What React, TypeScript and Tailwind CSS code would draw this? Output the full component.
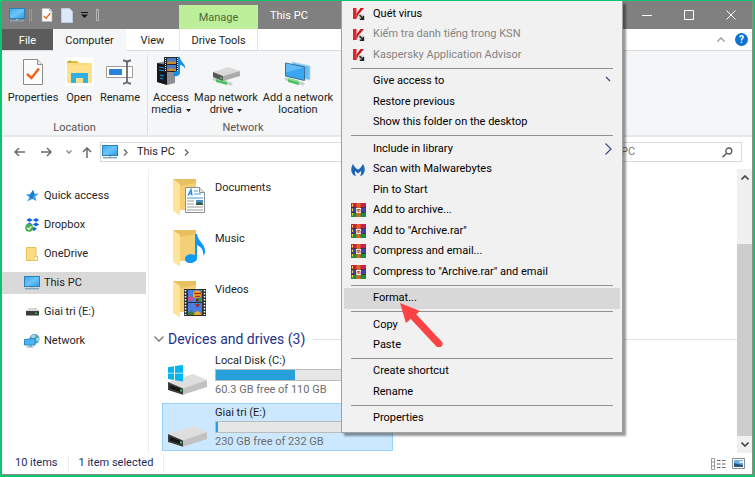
import type { ReactNode } from "react";

type MenuEntry = {
  label: string;
  icon?: "kaspersky" | "malwarebytes" | "rar";
  muted?: boolean;
  active?: boolean;
  arrow?: "full" | "cut";
};

const menuGroups: MenuEntry[][] = [
  [
    { label: "Quét virus", icon: "kaspersky" },
    { label: "Kiểm tra danh tiếng trong KSN", icon: "kaspersky", muted: true },
    { label: "Kaspersky Application Advisor", icon: "kaspersky", muted: true },
  ],
  [
    { label: "Give access to", arrow: "cut" },
    { label: "Restore previous" },
    { label: "Show this folder on the desktop" },
  ],
  [
    { label: "Include in library", arrow: "full" },
    { label: "Scan with Malwarebytes", icon: "malwarebytes" },
    { label: "Pin to Start" },
    { label: "Add to archive...", icon: "rar" },
    { label: 'Add to "Archive.rar"', icon: "rar" },
    { label: "Compress and email...", icon: "rar" },
    { label: 'Compress to "Archive.rar" and email', icon: "rar" },
  ],
  [{ label: "Format...", active: true }],
  [{ label: "Copy" }, { label: "Paste" }],
  [{ label: "Create shortcut" }, { label: "Rename" }],
  [{ label: "Properties" }],
];

function MonitorIcon({ className }: { className: string }) {
  return (
    <svg viewBox="0 0 16 14" className={className} aria-hidden="true">
      <defs>
        <linearGradient id="screen" x1="0" y1="0" x2="1" y2="1">
          <stop offset="0" stopColor="#3aa9ee" />
          <stop offset="0.5" stopColor="#6cc5f8" />
          <stop offset="1" stopColor="#2c9be6" />
        </linearGradient>
      </defs>
      <rect x="0.5" y="0.5" width="15" height="10" fill="url(#screen)" stroke="#2a7fb8" />
      <rect x="7" y="11" width="2" height="1" fill="#9fc4d8" />
      <rect x="1" y="12" width="14" height="1.4" fill="#7fa6ba" />
    </svg>
  );
}

function CheckPage({ className }: { className: string }) {
  return (
    <svg viewBox="0 0 20 26" className={className} aria-hidden="true">
      <path d="M.5.5h14l5 5v20H.5z" fill="#fbfbfb" stroke="#8c8c8c" />
      <path d="M14.5.5v5h5" fill="#e4e4e4" stroke="#8c8c8c" />
      <path d="M4 15l4.500 4L16 9.500" fill="none" stroke="#f0601e" strokeWidth="2.500" />
    </svg>
  );
}

function OpenFolderIcon() {
  return (
    <svg viewBox="0 0 29 29" className="size-[29px]" aria-hidden="true">
      <path d="M0 0h29v29H0z" fill="#fff" />
      <path d="M2 4h10l2 2h13v20H2z" fill="#fddc7b" />
      <path d="M2 4h10l2 2H2z" fill="#e9b93a" />
      <path d="M4 4.500h2" stroke="#5fae3c" strokeWidth="1.400" />
      <path d="M2 8h25v18H2z" fill="#ffe18d" />
      <path d="M6 26V16h17v10h-5v-5h-7v5z" fill="#2fb0e8" />
    </svg>
  );
}

function RenameIcon() {
  return (
    <svg viewBox="0 0 28 28" className="size-7" aria-hidden="true">
      <path d="M.5 8.500h26v11H.5z" fill="#fff" stroke="#9a9a9a" />
      <path d="M3 11h13v6H3z" fill="#2b83e0" />
      <path d="M17 2.500c3 0 4 .5 4 2.500v18c0 2-1 2.500-4 2.500M25 2.500c-3 0-4 .5-4 2.500v18c0 2 1 2.500 4 2.500" fill="none" stroke="#6a6a6a" strokeWidth="1.800" />
    </svg>
  );
}

function AccessMediaIcon() {
  return (
    <svg viewBox="0 0 30 29" className="h-[29px] w-[30px]" aria-hidden="true">
      <path d="M1 6l9-2 9 3v19l-8 2-10-3z" fill="#8b8f94" />
      <path d="M1 6l10 2v20L1 25z" fill="#14181d" />
      <path d="M3 10l6 1M3 13l6 1M4 18l4 1M4 21l3 1" stroke="#1d93ee" strokeWidth="1.200" />
      <path d="M8 0h15v15H8z" fill="#20242a" />
      <path d="M11 1h9v6h-9zM11 8h9v6h-9z" fill="#4c7cc7" />
      <path d="M11 6l3-2 3 1 3-1v3h-9zM11 13l4-2 5 1v2h-9z" fill="#c98a2c" />
      <path d="M9.500 1v14M21.500 1v14" stroke="#e9e9e9" strokeDasharray="1 1" />
      <path d="M22 0h2c0 5 6 6 5 12-1-3-3-4-5-4v8c0 3-7 5-7 1 0-2 3-3 5-3z" fill="#1391ea" />
    </svg>
  );
}

function DriveIcon({ className, windows }: { className: string; windows?: boolean }) {
  return (
    <svg viewBox="0 0 40 31" className={className} aria-hidden="true">
      <path d="M1 18L26 10l14 6-24 9z" fill="#dedede" />
      {windows && <path d="M1 3.200l6-.9v6.400H1zM8 2.100l8-1.200v7.800H8zM1 9.600h6V16l-6-.9zM8 9.600h8v7.800l-8-1.200z" fill="#00b4ef" />}
      <path d="M1 18l15 6.500v6.300L1 26z" fill="#3a3a3a" />
      <path d="M3 21l11 4v3L3 24.500z" fill="#161616" />
      <path d="M13 25.600h2v2h-2z" fill="#35d24a" />
      <path d="M16 24.500L40 16v7l-24 7.800z" fill="#c2c2c2" />
    </svg>
  );
}

function CableBase() {
  return (
    <>
      <path d="M3 22l17 5" stroke="#c9cfd2" strokeWidth="3" strokeLinecap="round" />
      <path d="M5 21l11 3v4L5 25z" fill="#4fbf62" />
      <path d="M5 21l11 3v1.500L5 22.500z" fill="#8be09a" />
    </>
  );
}

function MapDriveIcon() {
  return (
    <svg viewBox="0 0 30 29" className="h-[29px] w-[30px]" aria-hidden="true">
      <CableBase />
      <path d="M2 15l15-5 12 4-17 5z" fill="#dadada" />
      <path d="M2 15l10 4v5L2 20z" fill="#585858" />
      <path d="M12 19l17-5v5l-17 5z" fill="#ababab" />
      <path d="M9 20.500h2v1.500H9z" fill="#3ed353" />
    </svg>
  );
}

function NetworkLocationIcon() {
  return (
    <svg viewBox="0 0 30 29" className="h-[29px] w-[30px]" aria-hidden="true">
      <CableBase />
      <path d="M9 5l18 4v14l-18-4z" fill="#6abdf2" stroke="#b9d9eb" />
      <path d="M2.500 6l19 4v13.500l-19-4.500z" fill="#38a6f1" stroke="#3b6f94" />
      <path d="M3 6.500l18 4-18 5z" fill="#7dcbfa" opacity=".6" />
    </svg>
  );
}

function FolderIcon({ kind }: { kind: "doc" | "music" | "video" }) {
  return (
    <svg viewBox="0 0 36 38" className="h-[38px] w-9" aria-hidden="true">
      <path d="M1 1h23v31H8z" fill="#f3d075" />
      <path d="M1 1h23v4L8 8z" fill="#e8c05f" />
      <path d="M1 1l7 5v31.500L1 33z" fill="#ffe49a" />
      {kind === "doc" && (
        <g>
          <path d="M13.500 9.500h14l5 5v20h-19z" fill="#fff" stroke="#8e8e8e" />
          <path d="M27.500 9.500v5h5" fill="#e2e2e2" stroke="#8e8e8e" />
          <path d="M16 17.500l3-6 1 6M17 15.500h3" fill="none" stroke="#2288d8" strokeWidth="1.300" />
          <path d="M22 13h4M22 16h7M15 20h16" stroke="#3d9ade" strokeWidth="1.200" />
          <path d="M15 23h7M15 26h7M15 29h16M15 32h16" stroke="#9a9a9a" />
          <path d="M24 22h7v5h-7z" fill="#4e8fc0" />
          <path d="M24 25l4-1 3 2v1h-7z" fill="#325b42" />
        </g>
      )}
      {kind === "music" && (
        <path d="M23 5h2c1 8 9 10 8 19l-2 3c1-6-2-9-6-11v13c0 6-12 7-12 1 0-4 5-6 10-4z" fill="#0c98f5" />
      )}
      {kind === "video" && (
        <g>
          <path d="M12 9h22v27H12z" fill="#2f2f30" />
          <path d="M16 10h14v12H16zM16 23h14v12H16z" fill="#4a7fe0" />
          <circle cx="25" cy="14.500" r="4" fill="#f3b41d" />
          <path d="M22 13.500h7M23 16.500h5" stroke="#b52920" strokeWidth="1.500" />
          <path d="M24 18.500h3v3h-3z" fill="#58351b" />
          <circle cx="18.500" cy="18.500" r="2.500" fill="#d24a90" />
          <circle cx="28" cy="20" r="1.600" fill="#2f9b3b" />
          <path d="M16 33l3-2 3 2v2h-6z" fill="#3b7e38" />
          <path d="M22 35c0-5 7-5 7 0z" fill="#efae1c" />
          <path d="M23 24h5l-2.500 4z" fill="#a72626" />
          <path d="M13.500 10v25M32.500 10v25" stroke="#fff" strokeWidth="1.500" strokeDasharray="1.500 1.500" />
        </g>
      )}
    </svg>
  );
}

function MenuIcon({ name }: { name: NonNullable<MenuEntry["icon"]> }) {
  if (name === "kaspersky") {
    return (
      <svg viewBox="0 0 14 14" className="size-3.5" aria-hidden="true">
        <path d="M2 1h3.500v11H2z" fill="#e0242a" />
        <path d="M5.500 6.500L9.500 1H13L7.500 7.500 5.500 12z" fill="#c9181f" />
        <path d="M7.500 7.500H13V13H8z" fill="#c3cecb" />
        <path d="M8.500 8l3.500 3.500M12.500 9v3.300H9" fill="none" stroke="#222" strokeWidth="1.400" />
      </svg>
    );
  }
  if (name === "malwarebytes") {
    return (
      <svg viewBox="0 0 14 14" className="size-3.5" aria-hidden="true">
        <path d="M2 1c1.500 3 3 4.500 5 5.500C9 5.500 10.500 4 12 1c2.300 3.500 2.500 8-.5 11L9 13.200c1-1.700 1.300-3.500 1-5.200L7 10.500 4 8c-.3 1.700 0 3.500 1 5.200L2.500 12C-.5 9-.3 4.500 2 1z" fill="#1e66b5" />
      </svg>
    );
  }
  return (
    <svg viewBox="0 0 15 14" className="h-3.5 w-[15px]" aria-hidden="true">
      <path d="M0 0h15v4.500H0z" fill="#c71f4d" />
      <path d="M0 4.500h15v5H0z" fill="#3c42b4" />
      <path d="M0 9.500h15V14H0z" fill="#1a8f43" />
      <path d="M0 4.500h15M0 9.500h15" stroke="#3d2024" strokeWidth=".8" />
      <path d="M1.500 1v12" stroke="#eed13c" strokeDasharray="2.500 2" />
      <path d="M5.500 0h4v14h-4z" fill="#e2641d" />
      <path d="M5 5h5v5H5z" fill="#f7efe5" />
      <path d="M6 9V6.500h3V9M7.500 7v2" fill="none" stroke="#a34420" strokeWidth=".8" />
    </svg>
  );
}

function RibbonButton({ icon, label, width, caret }: { icon: ReactNode; label: string[]; width: string; caret?: boolean }) {
  return (
    <button type="button" className={`flex flex-col items-center ${width}`}>
      <span className="flex h-[37px] items-center pb-1">{icon}</span>
      {label.map((line, i) => (
        <span key={line} className="flex items-center gap-1 leading-3 whitespace-nowrap">
          {line}
          {caret && i === label.length - 1 && (
            <svg viewBox="0 0 5 3" className="h-[3px] w-[5px]" aria-hidden="true">
              <path d="M0 0h5L2.500 3z" fill="#222" />
            </svg>
          )}
        </span>
      ))}
    </button>
  );
}

function TitleBar() {
  return (
    <header className="flex h-7 items-stretch bg-[#808080] text-white">
      <div className="flex w-[177px] items-center pl-[7px]">
        <MonitorIcon className="h-3.5 w-4" />
        <span className="ml-1 h-3 w-[3px] border border-[#999]" />
        <CheckPage className="ml-[9px] h-3.5 w-3" />
        <svg viewBox="0 0 12 15" className="ml-2 h-[15px] w-3" aria-hidden="true">
          <path d="M.5.5h8l3 3v11H.5z" fill="#dce9fb" stroke="#bccbe2" />
        </svg>
        <svg viewBox="0 0 7 6" className="ml-2 h-1.5 w-[7px]" aria-hidden="true">
          <path d="M0 .5h7" stroke="#111" />
          <path d="M0 2.500h7L3.500 6z" fill="#111" />
        </svg>
        <span className="ml-2 h-3 w-[3px] border border-[#b5b5b5]" />
      </div>
      <div className="mt-1 flex w-[79px] items-center justify-center bg-[#bdee99] pt-0.5 text-[#4f6b3a]">Manage</div>
      <h1 className="ml-3 flex items-center pt-0.5">This PC</h1>
      <div className="ml-auto flex">
        <button type="button" aria-label="Minimize" className="flex w-[42px] items-center justify-center">
          <svg viewBox="0 0 10 10" className="size-2.5"><path d="M0 5.500h10" stroke="#fff" /></svg>
        </button>
        <button type="button" aria-label="Maximize" className="flex w-[42px] items-center justify-center">
          <svg viewBox="0 0 10 10" className="size-2.5"><path d="M.5.5h9v9h-9z" fill="none" stroke="#fff" /></svg>
        </button>
        <button type="button" aria-label="Close" className="flex w-[42px] items-center justify-center">
          <svg viewBox="0 0 10 10" className="size-2.5"><path d="M.5.5l9 9M9.500.5l-9 9" stroke="#fff" /></svg>
        </button>
      </div>
    </header>
  );
}

function Tabs() {
  return (
    <nav className="flex h-[22px] border-b border-[#dadbdc] bg-white">
      <button type="button" className="w-[51px] bg-[#5c5c5c] pt-1 text-white">File</button>
      <button type="button" className="-mb-px w-[73px] bg-[#f5f6f7] pt-0.5">Computer</button>
      <button type="button" className="w-[53px] pt-1">View</button>
      <button type="button" className="w-[79px] border-x border-[#e3e3e3] pt-1">Drive Tools</button>
      <div className="ml-auto flex items-center gap-2.5 pr-1">
        <button type="button" aria-label="Collapse ribbon">
          <svg viewBox="0 0 8 5" className="h-[5px] w-2"><path d="M.5 4.500L4 1l3.500 3.500" fill="none" stroke="#999" strokeWidth="1.300" /></svg>
        </button>
        <button type="button" aria-label="Help" className="flex size-[13px] items-center justify-center rounded-full bg-[#0a74d0] text-[10px] leading-none font-bold text-white">?</button>
      </div>
    </nav>
  );
}

function Ribbon() {
  return (
    <section className="flex h-[86px] border-b-2 border-[#e6e7e8] bg-[#f5f6f7] pt-1">
      <div className="flex w-[146px] flex-col justify-between border-r border-[#dfe0e1]">
        <div className="flex pl-1">
          <RibbonButton icon={<CheckPage className="h-[26px] w-5" />} label={["Properties"]} width="w-[54px]" />
          <RibbonButton icon={<OpenFolderIcon />} label={["Open"]} width="w-[38px]" />
          <RibbonButton icon={<RenameIcon />} label={["Rename"]} width="w-[44px]" />
        </div>
        <p className="pb-px text-center leading-3 text-[#555]">Location</p>
      </div>
      <div className="flex w-[190px] flex-col justify-between">
        <div className="flex">
          <RibbonButton icon={<AccessMediaIcon />} label={["Access", "media"]} width="w-[46px]" caret />
          <RibbonButton icon={<MapDriveIcon />} label={["Map network", "drive"]} width="w-16" caret />
          <RibbonButton icon={<NetworkLocationIcon />} label={["Add a network", "location"]} width="w-20" />
        </div>
        <p className="pb-px text-center leading-3 text-[#555]">Network</p>
      </div>
    </section>
  );
}

function Chevron() {
  return (
    <svg viewBox="0 0 5 7" className="h-[7px] w-[5px]" aria-hidden="true">
      <path d="M1 .5l3 3-3 3" fill="none" stroke="#666" strokeWidth="1.300" />
    </svg>
  );
}

function AddressBar() {
  return (
    <div className="flex h-[30px] items-center pr-2.5 pl-3">
      <button type="button" aria-label="Back" className="w-[27px]">
        <svg viewBox="0 0 11 10" className="h-2.5 w-[11px]"><path d="M11 5H1M5 1L1 5l4 4" fill="none" stroke="#6b6b6b" strokeWidth="1.500" /></svg>
      </button>
      <button type="button" aria-label="Forward" className="w-[25px]">
        <svg viewBox="0 0 11 10" className="h-2.5 w-[11px]"><path d="M0 5h10M6 1l4 4-4 4" fill="none" stroke="#6b6b6b" strokeWidth="1.500" /></svg>
      </button>
      <button type="button" aria-label="Recent locations" className="w-4">
        <svg viewBox="0 0 6 4" className="h-1 w-1.5"><path d="M.5.5L3 3 5.500.5" fill="none" stroke="#888" strokeWidth="1.300" /></svg>
      </button>
      <button type="button" aria-label="Up" className="w-[18px]">
        <svg viewBox="0 0 10 11" className="h-[11px] w-2.5"><path d="M5 11V1M1 5l4-4 4 4" fill="none" stroke="#6b6b6b" strokeWidth="1.500" /></svg>
      </button>
      <div className="flex h-5 flex-1 items-center border border-[#d9d9d9] pl-px">
        <MonitorIcon className="h-3.5 w-4" />
        <span className="ml-[5px]"><Chevron /></span>
        <a href="#this-pc" className="ml-[9px]">This PC</a>
        <span className="ml-[9px]"><Chevron /></span>
      </div>
      <div className="ml-2 flex h-5 w-[182px] items-center border border-[#d9d9d9] pr-2">
        <input type="search" aria-label="Search This PC" placeholder="Search This PC" className="min-w-0 flex-1 outline-none placeholder:text-[#777]" />
        <svg viewBox="0 0 11 11" className="size-[11px]" aria-hidden="true">
          <circle cx="6.800" cy="4" r="3" fill="none" stroke="#555" strokeWidth="1.300" />
          <path d="M4.600 6.200L.5 10.300" stroke="#555" strokeWidth="1.500" />
        </svg>
      </div>
    </div>
  );
}

const places: { label: string; icon: ReactNode; active?: boolean }[] = [
  {
    label: "Quick access",
    icon: (
      <svg viewBox="0 0 14 12" className="h-3 w-3.5">
        <path d="M8 0l1.300 3.600 4.500.2-3.500 2.700 1 4.500L7.500 9 2 11.500l2.500-4L1 4.600l4.600-.8z" fill="#3aa3e8" />
        <path d="M8 0l1.300 3.600L7.500 9l-3-1.500 1.100-3.700z" fill="#1b7ccc" />
      </svg>
    ),
  },
  {
    label: "Dropbox",
    icon: (
      <svg viewBox="0 0 15 14" className="h-3.5 w-[15px]">
        <path d="M4.500 0l3.200 2-3.200 2-3.200-2zM11 0l3.200 2L11 4 7.800 2zM4.500 4.500l3.200 2-3.200 2-3.200-2zM11 4.500l3.200 2-3.200 2-3.200-2zM9 9l3 1.600L9 13l-3-2z" fill="#0f62f0" />
        <circle cx="4.200" cy="9.800" r="4" fill="#4cae4f" />
        <path d="M2.200 9.800l1.600 1.600 2.600-3" fill="none" stroke="#fff" strokeWidth="1.300" />
      </svg>
    ),
  },
  {
    label: "OneDrive",
    icon: (
      <svg viewBox="0 0 12 14" className="h-3.5 w-3">
        <path d="M.5.5h9.500v9h1.500v4H.5z" fill="#fbdc80" stroke="#e8c35c" />
        <path d="M8 9.500h3.500v4H8z" fill="#fff0bd" stroke="#e3bc52" strokeWidth=".7" />
      </svg>
    ),
  },
  { label: "This PC", icon: <MonitorIcon className="h-3.5 w-4" />, active: true },
  {
    label: "Giai tri (E:)",
    icon: (
      <svg viewBox="0 0 13 8" className="h-2 w-[13px]">
        <path d="M2.500 0h8L13 3H0z" fill="#d8d8d8" />
        <path d="M0 3h13v4H0z" fill="#3a3d3f" />
        <path d="M9 4.500h2v1.300H9z" fill="#38cf4c" />
        <path d="M0 7h13v1H0z" fill="#9b9b9b" />
      </svg>
    ),
  },
  {
    label: "Network",
    icon: (
      <svg viewBox="0 0 16 14" className="h-3.5 w-4">
        <circle cx="10.500" cy="5" r="5" fill="#4f9fbe" />
        <path d="M7 2l3-1.500 2 1-1 2-3 1zM12 4l3 0-.5 3-2 .5z" fill="#a9d7e4" />
        <path d="M.5 5.500l10.500-1v6.500H.5z" fill="#4ab5f5" stroke="#2b87bf" />
        <path d="M5 11h3v1.500H5zM2.500 12.500h7v1h-7z" fill="#84a9bb" />
      </svg>
    ),
  },
];

function Sidebar() {
  return (
    <nav aria-label="Places" className="mt-0.5 flex w-[147px] flex-col gap-[7px] border-r border-[#f0f0f0] pt-4 pr-0.5">
      {places.map((place) => (
        <a
          key={place.label}
          href="#"
          className={`flex h-[22px] items-center gap-1 pl-[22px] ${place.active ? "bg-[#d9d9d9]" : ""}`}
        >
          <span className="flex w-4 justify-center">{place.icon}</span>
          {place.label}
        </a>
      ))}
    </nav>
  );
}

function Drive({ name, free, used, selected, windows }: { name: string; free: string; used: number; selected?: boolean; windows?: boolean }) {
  return (
    <div className={`flex h-12 w-[231px] gap-2 border pl-1 ${selected ? "border-[#99d1ff] bg-[#cce8ff]" : "border-transparent"}`}>
      <DriveIcon className="mt-3 h-[31px] w-10" windows={windows} />
      <div className="flex-1 pt-px">
        <p className="leading-[15px]">{name}</p>
        <div className="my-px h-3 border border-[#bcbcbc] bg-[#e6e6e6]">
          <div className="h-full bg-[#26a0da]" style={{ width: `${used}%` }} />
        </div>
        <p className="leading-[15px] text-[#6d6d6d]">{free}</p>
      </div>
    </div>
  );
}

function Files() {
  return (
    <main className="flex-1 overflow-hidden pt-[7px] pl-[5px]">
      {(["Documents", "Music", "Videos"] as const).map((name, i) => (
        <div key={name} className="flex h-[51px] gap-[7px] pt-1 pl-[18px]">
          <FolderIcon kind={(["doc", "music", "video"] as const)[i]} />
          <span className="pt-0.5">{name}</span>
        </div>
      ))}
      <h2 className="flex h-6 items-center gap-1 text-[14px] text-[#1e3287]">
        <svg viewBox="0 0 10 6" className="h-1.5 w-2.5" aria-hidden="true">
          <path d="M.5.5L5 5 9.500.5" fill="none" stroke="#777" strokeWidth="1.300" />
        </svg>
        Devices and drives (3)
        <span className="ml-1 h-px flex-1 bg-[#e2e2e2]" />
      </h2>
      <div className="flex flex-col gap-1 pl-2">
        <Drive name="Local Disk (C:)" free="60.3 GB free of 110 GB" used={45} windows />
        <Drive name="Giai tri (E:)" free="230 GB free of 232 GB" used={1} selected />
      </div>
    </main>
  );
}

function Scrollbar() {
  return (
    <div className="mt-0.5 flex w-[15px] flex-col items-center bg-[#f0f0f0] py-1.5">
      <svg viewBox="0 0 8 5" className="h-[5px] w-2"><path d="M.5 4.500L4 1l3.500 3.500" fill="none" stroke="#444" strokeWidth="1.600" /></svg>
      <div className="mt-16 mb-1.5 w-full flex-1 bg-[#cdcdcd]" />
      <svg viewBox="0 0 8 5" className="h-[5px] w-2"><path d="M.5.5L4 4 7.500.5" fill="none" stroke="#444" strokeWidth="1.600" /></svg>
    </div>
  );
}

function StatusBar() {
  return (
    <footer className="flex h-[21px] items-center pr-[7px] pl-[13px] text-[#1c2b5a]">
      <span className="border-r border-[#eee] pr-2.5">10 items</span>
      <span className="border-r border-[#eee] px-2.5">1 item selected</span>
      <div className="ml-auto flex items-center gap-1.5">
        <button type="button" aria-label="Details view">
          <svg viewBox="0 0 15 12" className="block h-3 w-[15px]">
            <path d="M.5.5h3v11h-3zM.5 4h3M.5 8h3" fill="none" stroke="#999" />
            <path d="M6 2.500h3.500M11 2.500h3.500M6 6h3.500M11 6h3.500M6 9.500h3.500M11 9.500h3.500" stroke="#666" />
          </svg>
        </button>
        <button type="button" aria-label="Large icons view">
          <svg viewBox="0 0 13 11" className="block h-[11px] w-[13px]">
            <path d="M.5.5h12v10H.5z" fill="#fff" stroke="#8b8b8b" />
            <path d="M2 2h9v7H2z" fill="#69aee8" />
            <path d="M2 5l4 1 5 1v2H2z" fill="#26577c" />
            <path d="M7 3h4v2H8z" fill="#d8ecfa" />
          </svg>
        </button>
      </div>
    </footer>
  );
}

function ContextMenu() {
  return (
    <div
      role="menu"
      className="absolute top-0 bottom-[41px] left-[339px] flex w-[282px] flex-col border border-t-0 border-[#a0a0a0] bg-[#f1f1f1] px-0.5 py-[3px] text-black shadow-[3px_3px_2px_#00000066]"
    >
      {menuGroups.map((group, i) => (
        <div key={group[0].label} className="contents">
          {i > 0 && (
            <div className="flex h-1.5 items-center px-[7px]">
              <div className="h-px flex-1 bg-[#919191]" />
            </div>
          )}
          {group.map((item) => (
            <button
              key={item.label}
              type="button"
              role="menuitem"
              className={`flex min-h-0 flex-1 items-center pr-2 pl-[7px] ${item.active ? "bg-[#d8d8d8]" : ""} ${item.muted ? "text-[#848484]" : ""}`}
            >
              <span className="flex w-[22px]">{item.icon && <MenuIcon name={item.icon} />}</span>
              {item.label}
              {item.arrow && (
                <svg viewBox="0 0 7 12" className="ml-auto h-3 w-[7px]" aria-hidden="true">
                  <path d={item.arrow === "full" ? "M.5.5L6 6 .5 11.500" : "M1 1l4 4"} fill="none" stroke="#3c4c86" strokeWidth="1.200" />
                </svg>
              )}
            </button>
          ))}
        </div>
      ))}
      <svg viewBox="0 0 44 45" className="pointer-events-none absolute top-[301px] left-[57px] h-[45px] w-11" aria-hidden="true">
        <path d="M12 12l28 30" stroke="#fb4245" strokeWidth="7" strokeLinecap="round" />
        <path d="M1 1l20 8L7 21z" fill="#fb4245" />
      </svg>
    </div>
  );
}

export default function App() {
  return (
    <div className="flex min-h-screen flex-col border-2 border-t border-[#0ec46e] bg-white font-[Roboto,'Open_Sans',sans-serif] text-[11px] text-[#1e1e1e]">
      <div className="relative flex flex-1 flex-col border-r border-b border-[#8c8c8c]">
        <TitleBar />
        <Tabs />
        <Ribbon />
        <AddressBar />
        <div className="flex flex-1">
          <Sidebar />
          <Files />
          <Scrollbar />
        </div>
        <StatusBar />
        <ContextMenu />
      </div>
    </div>
  );
}
